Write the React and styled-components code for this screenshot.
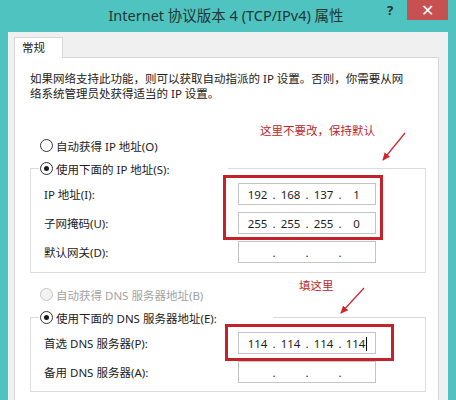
import React from 'react';
import styled, { createGlobalStyle } from 'styled-components';

const GlobalStyle = createGlobalStyle`
  html, body {
    margin: 0;
    padding: 0;
  }
  body {
    background: #4fc3bf;
    font-family: "Noto Sans", "Noto Sans CJK SC", sans-serif;
  }
`;

const Window = styled.div`
  width: 456px;
  height: 400px;
  overflow: hidden;
  background: #4fc3bf;
  display: flex;
  flex-direction: column;
`;

const TitleBar = styled.div`
  height: 32px;
  flex: none;
  display: grid;
  grid-template-columns: 1fr auto 1fr;
  align-items: start;
`;

const Title = styled.div`
  grid-column: 2;
  padding-right: 4px;
  line-height: 30px;
  font-size: 14.5px;
  color: #223636;
  white-space: nowrap;
`;

const Controls = styled.div`
  grid-column: 3;
  justify-self: end;
  display: flex;
  align-items: flex-start;
  margin-right: 8px;
`;

const HelpButton = styled.div`
  width: 14px;
  margin-right: 10px;
  line-height: 21px;
  font-size: 13px;
  font-weight: bold;
  color: #1d3030;
  text-align: center;
`;

const CloseButton = styled.div`
  width: 41px;
  height: 20px;
  background: #c75050;
  color: #fff;
  font-size: 16px;
  display: flex;
  align-items: center;
  justify-content: center;
`;

const Body = styled.div`
  flex: 1;
  margin: 0 8px;
  background: #f0f0f0;
  padding: 5px 9px 0 6px;
  display: flex;
  flex-direction: column;
  min-height: 0;
`;

const Tab = styled.div`
  box-sizing: border-box;
  width: 49px;
  height: 22px;
  border: 1px solid #d6d6d6;
  border-bottom: none;
  background: #fff;
  font-size: 11.5px;
  line-height: 20px;
  padding-left: 7px;
  color: #222;
  position: relative;
  z-index: 1;
  margin-bottom: -1px;
`;

const Panel = styled.div`
  position: relative;
  min-height: 360px;
  background: #fff;
  border: 1px solid #d6d6d6;
  padding: 13px 12px 0 15px;
  color: #222;
`;

const Description = styled.p`
  margin: 0 0 33px;
  font-size: 11.5px;
  line-height: 15px;
`;

const RadioRow = styled.label`
  display: flex;
  align-items: center;
  height: 23px;
  padding-left: ${p => (p.$inLegend ? 0 : 10)}px;
  font-size: 11.5px;
  color: ${p => (p.$disabled ? '#a3a3a3' : '#222')};
  white-space: nowrap;
`;

const RadioDot = styled.span`
  box-sizing: border-box;
  width: 13px;
  height: 13px;
  margin-right: 3px;
  border-radius: 50%;
  border: 1px solid ${p => (p.$disabled ? '#c4c4c4' : '#333')};
  background: ${p => (p.$disabled ? '#f2f2f2' : '#fff')};
  display: flex;
  align-items: center;
  justify-content: center;

  &::after {
    content: '';
    width: 5px;
    height: 5px;
    border-radius: 50%;
    background: ${p => (p.$checked ? '#1a1a1a' : 'transparent')};
  }
`;

const Group = styled.fieldset`
  margin: 0;
  min-width: 0;
  border: 1px solid #dcdcdc;
  padding: 3px 0 ${p => p.$bottom}px 13px;
`;

/* the legend sits inside the fieldset padding, so pull it back to the edge */
const Legend = styled.legend`
  margin-left: -5px;
  padding: 0 ${p => p.$gap}px 0 1px;
`;

const Spacer = styled.div`
  height: 10px;
`;

const FieldGrid = styled.div`
  display: grid;
  grid-template-columns: 194px 138px;
  row-gap: 7px;
  align-items: center;
`;

const FieldLabel = styled.span`
  font-size: 11.5px;
  color: #222;
  white-space: nowrap;
`;

const IpBox = styled.div`
  box-sizing: border-box;
  width: 138px;
  height: 22px;
  border: 1px solid #c4c4c4;
  padding: 0 5px;
  display: flex;
  align-items: center;
  font-family: "Noto Sans", sans-serif;
  font-size: 11.5px;
  color: #1e1e1e;
`;

const Segment = styled.span`
  width: 27px;
  text-align: center;
  white-space: nowrap;
`;

const Dot = styled.span`
  width: 6px;
  text-align: center;
`;

const Caret = styled.span`
  display: inline-block;
  width: 1px;
  height: 14px;
  margin-left: 1px;
  background: #000;
  vertical-align: -3px;
`;

const Note = styled.div`
  position: absolute;
  left: ${p => p.$x}px;
  top: ${p => p.$y}px;
  font-size: 11.5px;
  line-height: 16px;
  color: #c0262c;
  white-space: nowrap;
  z-index: 2;
`;

const RedBox = styled.div`
  position: absolute;
  box-sizing: border-box;
  left: ${p => p.$x}px;
  top: ${p => p.$y}px;
  width: ${p => p.$w}px;
  height: ${p => p.$h}px;
  border: 3px solid #c4222a;
  z-index: 2;
`;

const ArrowLayer = styled.svg`
  position: absolute;
  left: 0;
  top: 0;
  width: 100%;
  height: 100%;
  pointer-events: none;
  z-index: 2;
`;

function Radio({ checked, disabled, inLegend, children }) {
  return (
    <RadioRow $disabled={disabled} $inLegend={inLegend}>
      <RadioDot $checked={checked} $disabled={disabled} />
      {children}
    </RadioRow>
  );
}

function IpField({ parts = ['', '', '', ''], caret }) {
  return (
    <IpBox>
      {parts.map((p, i) => (
        <React.Fragment key={i}>
          {i > 0 && <Dot>.</Dot>}
          <Segment>
            {p}
            {caret && i === 3 && <Caret />}
          </Segment>
        </React.Fragment>
      ))}
    </IpBox>
  );
}

const ipRows = [
  { label: 'IP 地址(I):', parts: ['192', '168', '137', '1'] },
  { label: '子网掩码(U):', parts: ['255', '255', '255', '0'] },
  { label: '默认网关(D):' },
];

const dnsRows = [
  { label: '首选 DNS 服务器(P):', parts: ['114', '114', '114', '114'], caret: true },
  { label: '备用 DNS 服务器(A):' },
];

function Fields({ rows }) {
  return (
    <FieldGrid>
      {rows.map(r => (
        <React.Fragment key={r.label}>
          <FieldLabel>{r.label}</FieldLabel>
          <IpField parts={r.parts} caret={r.caret} />
        </React.Fragment>
      ))}
    </FieldGrid>
  );
}

export default function App() {
  return (
    <>
      <GlobalStyle />
      <Window>
        <TitleBar>
          <Title>Internet 协议版本 4 (TCP/IPv4) 属性</Title>
          <Controls>
            <HelpButton>?</HelpButton>
            <CloseButton>✕</CloseButton>
          </Controls>
        </TitleBar>
        <Body>
          <Tab>常规</Tab>
          <Panel>
            <Description>
              如果网络支持此功能，则可以获取自动指派的 IP 设置。否则，你需要从网
              <br />
              络系统管理员处获得适当的 IP 设置。
            </Description>

            <Radio>自动获得 IP 地址(O)</Radio>
            <Group $bottom={9}>
              <Legend $gap={58}>
                <Radio checked inLegend>使用下面的 IP 地址(S):</Radio>
              </Legend>
              <Fields rows={ipRows} />
            </Group>

            <Spacer />
            <Radio disabled>自动获得 DNS 服务器地址(B)</Radio>
            <Group $bottom={8}>
              <Legend $gap={56}>
                <Radio checked inLegend>使用下面的 DNS 服务器地址(E):</Radio>
              </Legend>
              <Fields rows={dnsRows} />
            </Group>

            <Note $x={245} $y={65}>这里不要改，保持默认</Note>
            <Note $x={284} $y={220}>填这里</Note>
            <RedBox $x={208} $y={117} $w={160} $h={65} />
            <RedBox $x={210} $y={266} $w={169} $h={37} />
            <ArrowLayer>
              <defs>
                <marker id="head" markerWidth="8" markerHeight="8" refX="7" refY="4" orient="auto" markerUnits="userSpaceOnUse">
                  <path d="M0,0.5 L8,4 L0,7.5 Z" fill="#d2232a" />
                </marker>
              </defs>
              <line x1="390" y1="75" x2="368" y2="102" stroke="#d2232a" strokeWidth="1.2" markerEnd="url(#head)" />
              <line x1="349" y1="230" x2="326" y2="255" stroke="#d2232a" strokeWidth="1.2" markerEnd="url(#head)" />
            </ArrowLayer>
          </Panel>
        </Body>
      </Window>
    </>
  );
}
